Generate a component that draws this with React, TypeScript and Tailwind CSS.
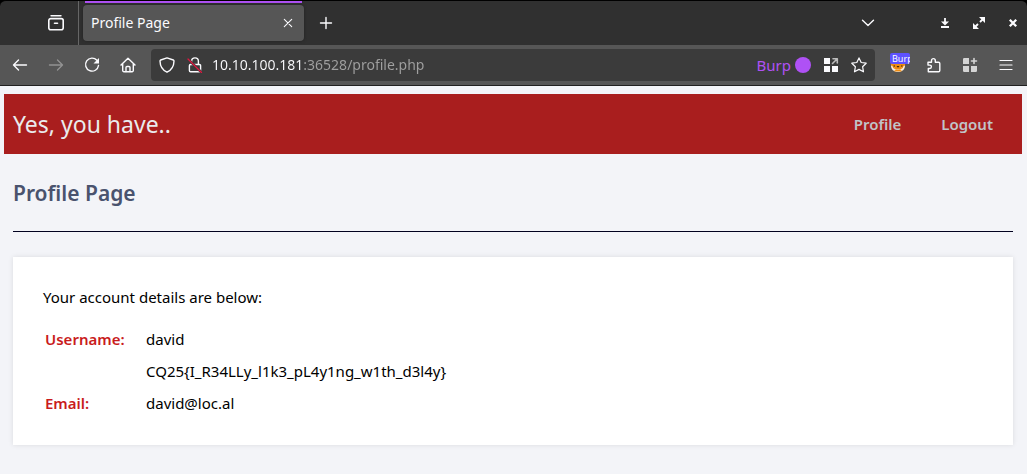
import type { ReactNode } from 'react';

type IconProps = { children: ReactNode; className?: string };

function Icon({ children, className = '' }: IconProps) {
  return (
    <svg
      viewBox="0 0 16 16"
      className={`size-4 shrink-0 ${className}`}
      fill="none"
      stroke="currentColor"
      strokeWidth="1.4"
      strokeLinecap="round"
      strokeLinejoin="round"
      aria-hidden="true"
    >
      {children}
    </svg>
  );
}

type ToolProps = { label: string; children: ReactNode; className?: string };

function Tool({ label, children, className = '' }: ToolProps) {
  return (
    <button type="button" aria-label={label} className={`flex h-8 shrink-0 items-center justify-center ${className}`}>
      {children}
    </button>
  );
}

function TabStrip() {
  return (
    <div className="flex h-[45px] items-stretch rounded-t-md border-t border-black bg-[#303030]">
      <div className="flex w-[79px] shrink-0 items-center justify-end border-r border-[#666666] pr-[10px]">
        <Tool label="View recent browsing" className="w-6">
          <Icon>
            <path d="M3 .8h10" />
            <path d="M2.800 3.600h10.400a2 2 0 0 1 2 2v7.200a2 2 0 0 1-2 2H2.800a2 2 0 0 1-2-2V5.600a2 2 0 0 1 2-2z" strokeWidth="1.600" />
            <path d="M6.500 8.300h3" strokeWidth="1.600" />
          </Icon>
        </Tool>
      </div>
      <div className="ml-1 flex w-[221px] shrink-0 flex-col">
        <div className="mx-0.5 h-[3px] border-b border-[#303030] bg-[#af51f5]" />
        <div className="mt-px flex h-9 items-center justify-between rounded bg-[#565656] pr-1 pl-2 shadow-[0_0_3px_#202020]">
          <span className="text-sm text-[#fbfbfe]">Profile Page</span>
          <Tool label="Close tab" className="w-6">
            <Icon>
              <path d="M4.300 4.300l7.400 7.400M11.700 4.300l-7.400 7.400" strokeWidth="1.1" />
            </Icon>
          </Tool>
        </div>
      </div>
      <div className="flex flex-1 items-center justify-between pr-[2px] pl-[10px]">
        <Tool label="Open a new tab" className="w-6">
          <Icon>
            <path d="M8 2.500v11M2.500 8h11" />
          </Icon>
        </Tool>
        <div className="flex items-center">
          <Tool label="List all tabs" className="mr-[53px] w-6">
            <Icon>
              <path d="M2.500 5.300 8 10.500l5.500-5.200" />
            </Icon>
          </Tool>
          <div className="flex gap-[10px]">
            <Tool label="Minimize" className="w-6">
              <Icon>
                <path d="M8 3v6M4 12h8" strokeWidth="1.8" strokeLinecap="butt" />
                <path d="M4 6.500h8L8 10.500z" fill="currentColor" stroke="none" />
              </Icon>
            </Tool>
            <Tool label="Maximize" className="w-6">
              <Icon>
                <path d="M8 2h6v6zM2 8v6h6z" fill="currentColor" stroke="none" />
                <path d="m12 4-3 3M7 9l-3 3" strokeWidth="1.800" strokeLinecap="butt" />
              </Icon>
            </Tool>
            <Tool label="Close window" className="w-6">
              <Icon>
                <path d="m4.800 4.800 6.400 6.400M11.200 4.800l-6.400 6.400" strokeWidth="2.300" strokeLinecap="butt" />
              </Icon>
            </Tool>
          </div>
        </div>
      </div>
    </div>
  );
}

function NavigationBar() {
  return (
    <div className="flex h-[41px] items-center border-b border-[#202020] bg-[#565656] pr-[9px] pl-2">
      <div className="flex gap-3">
        <Tool label="Back" className="w-6">
          <Icon>
            <path d="M14.500 8h-13M6.500 3l-5 5 5 5" />
          </Icon>
        </Tool>
        <Tool label="Forward" className="w-6 text-[#929292]">
          <Icon>
            <path d="M1.500 8h13M9.500 3l5 5-5 5" />
          </Icon>
        </Tool>
        <Tool label="Reload" className="w-6">
          <Icon>
            <path d="M12.900 3.300A6.500 6.500 0 1 0 14.500 8.500" />
            <path d="M15 1v5.500H9.500z" fill="currentColor" stroke="none" />
          </Icon>
        </Tool>
        <Tool label="Home" className="w-6">
          <Icon>
            <path d="M1 8 8 1.200 15 8M2.700 6.800v6.700a1.200 1.200 0 0 0 1.200 1.200h8.200a1.200 1.200 0 0 0 1.200-1.200V6.800" />
            <path d="M6 14.500v-4a1 1 0 0 1 1-1h2a1 1 0 0 1 1 1v4" />
          </Icon>
        </Tool>
      </div>
      <div className="ml-[11px] flex h-8 flex-1 items-center rounded bg-[#3b3b3b] pr-1 pl-1">
        <Tool label="Tracking protection" className="w-6">
          <Icon>
            <path d="M8 .9 14.300 3c.5.200.7.500.7 1-.1 5-2.200 9-7 11.200C3.200 13 1.100 9 1 4c0-.500.200-.800.700-1z" />
          </Icon>
        </Tool>
        <Tool label="Connection is not secure" className="ml-1 w-6">
          <Icon>
            <path d="M4.600 7V4.300a3.400 3.400 0 0 1 6.800 0V7M3.600 7.500h8.800a1.200 1.200 0 0 1 1.200 1.200v4.900a1.200 1.200 0 0 1-1.200 1.200H3.600a1.200 1.200 0 0 1-1.200-1.200V8.700a1.200 1.200 0 0 1 1.200-1.200z" />
            <path d="M1.500 2.500 14.500 15.500" stroke="#3b3b3b" strokeWidth="2.500" />
            <path d="M1 2 14.500 15.500" stroke="#e2163f" strokeWidth="1.200" />
          </Icon>
        </Tool>
        <input
          type="text"
          aria-label="Address"
          defaultValue="10.10.100.181:36528/profile.php"
          className="ml-[5px] min-w-0 flex-1 bg-[linear-gradient(90deg,#fbfbfe_91px,#a0a0a0_91px)] bg-clip-text text-sm text-transparent outline-none"
        />
        <button type="button" className="flex items-center gap-1 text-[15px] text-[#af51f5]">
          Burp
          <span className="size-4 rounded-full bg-[#af51f5]" />
        </button>
        <Tool label="Open in container" className="ml-2 w-6">
          <Icon>
            <path d="M1 1h6v6H1zM1 9h6v6H1zM9 9h6v6H9z" fill="currentColor" stroke="none" />
            <path d="M9.500 6.500 13.500 2.500M10 1.700h4.300V6" stroke="#bdbdbd" strokeWidth="1.600" />
          </Icon>
        </Tool>
        <Tool label="Bookmark this page" className="ml-1 w-6">
          <Icon>
            <path d="m8 .9 2.200 4.600 5 .7-3.600 3.500.9 5.100L8 12.400l-4.500 2.400.9-5.100L.8 6.200l5-.7z" strokeWidth="1.200" />
          </Icon>
        </Tool>
      </div>
      <div className="ml-[11px] flex gap-3">
        <Tool label="Proxy switcher" className="w-7">
          <span className="relative flex h-6 w-5 items-end justify-center pr-1 pb-1">
            <Icon>
              <path d="M.8 5h14.400c.3 5-2.200 9.800-7.200 9.800S.5 10 .8 5z" fill="#ef8c12" stroke="none" />
              <path d="M1 8.500c1 .2 2.100 1.500 3.500 2L6 12.500h4l1.500-2c1.400-.5 2.500-1.800 3.500-2-.2 4-2.500 6.300-7 6.300S1.200 12.500 1 8.500z" fill="#f8eee0" stroke="none" />
              <path d="M3.500 10.500 6 12l2-1.500 2 1.500 2.500-1.500M5 13.800l3-.4 3 .4" stroke="#ef8c12" strokeWidth="1.200" />
              <path d="M6.500 9h3L8 10.700zM3.500 8.500h1.500v1H3.500zM11 8.500h1.500v1H11z" fill="#3a210b" stroke="none" />
            </Icon>
            <span className="absolute top-0 left-0 h-[11px] w-5 overflow-hidden rounded-xs bg-[#5d52ff] pl-0.5 text-left text-[9px] leading-[11px]">
              Burp
            </span>
          </span>
        </Tool>
        <Tool label="Extensions" className="-ml-1 w-6">
          <Icon>
            <path d="M2 5.200h3.500V3.500a1.900 1.900 0 0 1 3.800 0v1.700h3.200a1.300 1.300 0 0 1 1.300 1.300v7a1.300 1.300 0 0 1-1.300 1.300H2.300v-3.300h1.400a1.700 1.700 0 0 0 0-3.400H2z" />
          </Icon>
        </Tool>
        <Tool label="Add to toolbar" className="w-6 text-[#d4d4d4]">
          <Icon>
            <path d="M1 2.200A1.200 1.200 0 0 1 2.200 1H7v6H1zM1 9h6v6H2.200A1.200 1.200 0 0 1 1 13.800zM9 9h6v4.800a1.200 1.200 0 0 1-1.200 1.200H9z" fill="currentColor" stroke="none" />
            <path d="M12 1.500v5M9.500 4h5" strokeWidth="1.600" />
          </Icon>
        </Tool>
        <Tool label="Application menu" className="w-6">
          <Icon>
            <path d="M2 3.500h12M2 8h12M2 12.500h12" strokeWidth="1.200" />
          </Icon>
        </Tool>
      </div>
    </div>
  );
}

export default function App() {
  return (
    <div className="min-h-screen bg-[#f3f4f8] font-['Noto_Sans',sans-serif]">
      <header className="bg-black text-[#fbfbfe]">
        <TabStrip />
        <NavigationBar />
      </header>
      <div className="pt-2 pr-[5px] pl-1">
        <nav className="flex h-[60px] items-center justify-between bg-[#a91e1e] pr-[29px] pl-[9px]">
          <h1 className="text-[23px] font-normal text-[#eaebed]">Yes, you have..</h1>
          <div className="flex gap-10 text-[15px] font-semibold text-[#c1c4c8]">
            <a href="#profile">Profile</a>
            <a href="#logout">Logout</a>
          </div>
        </nav>
        <main className="px-[9px] pb-7">
          <h2 className="border-b border-[#01011f] pt-[23px] pb-[22px] text-[21px] leading-8 font-semibold text-[#4a536e]">
            Profile Page
          </h2>
          <section className="mt-[25px] bg-white px-[30px] pt-7 pb-[26px] text-[15px] leading-6 text-black shadow-[0_0_5px_rgba(0,0,0,0.1)]">
            <p>Your account details are below:</p>
            <table className="mt-[14px]">
              <tbody>
                <tr className="h-8">
                  <th scope="row" className="w-[103px] pl-0.5 text-left font-semibold text-[#c91c1c]">Username:</th>
                  <td>david</td>
                </tr>
                <tr className="h-8">
                  <th />
                  <td>CQ25&#123;I_R34LLy_l1k3_pL4y1ng_w1th_d3l4y&#125;</td>
                </tr>
                <tr className="h-8">
                  <th scope="row" className="pl-0.5 text-left font-semibold text-[#c91c1c]">Email:</th>
                  <td>david@loc.al</td>
                </tr>
              </tbody>
            </table>
          </section>
        </main>
      </div>
    </div>
  );
}
